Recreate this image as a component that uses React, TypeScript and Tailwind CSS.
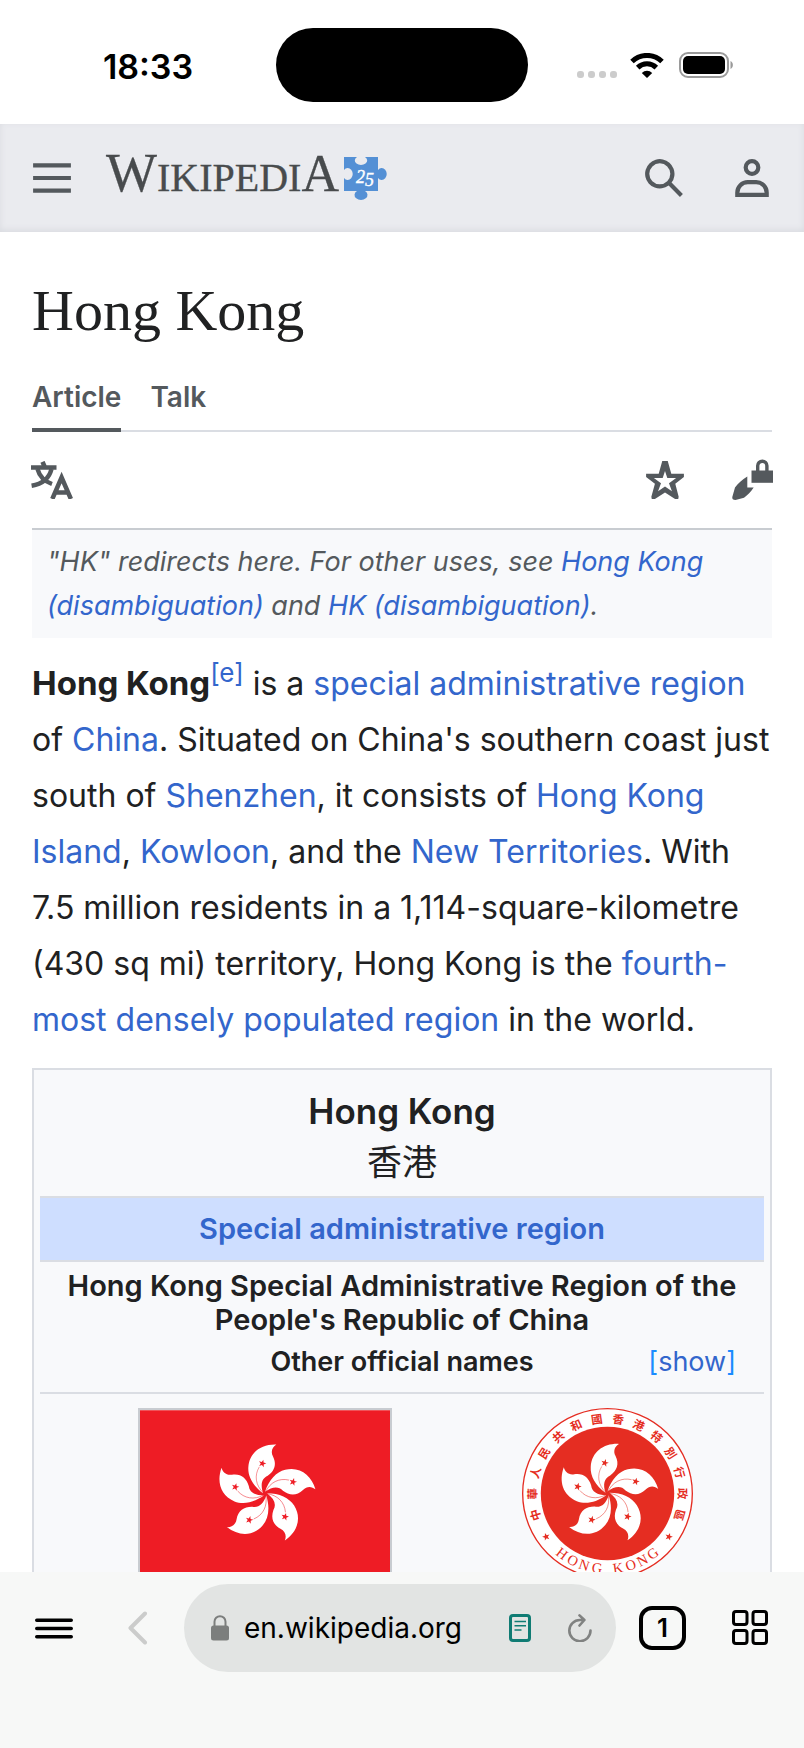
import React from "react";

type IconProps = {
  className?: string;
};

type TextLinkProps = {
  children: React.ReactNode;
};

const PETAL_ANGLES = [0, 72, 144, 216, 288];

const SEAL_CHARACTERS = "中華人民共和國香港特別行政區".split("");

const SEAL_LETTERS = [
  { char: "H", angle: 37 },
  { char: "O", angle: 27.5 },
  { char: "N", angle: 18 },
  { char: "G", angle: 8 },
  { char: "K", angle: -8 },
  { char: "O", angle: -18 },
  { char: "N", angle: -27.5 },
  { char: "G", angle: -37 },
];

const STAR_POINTS = "0,-12 2.8,-3.9 11.4,-3.7 4.6,1.5 7.1,9.7 0,4.8 -7.1,9.7 -4.6,1.5 -11.4,-3.7 -2.8,-3.9";

function WifiIcon({ className }: IconProps) {
  return (
    <svg className={className} viewBox="0 0 34 25" fill="none" stroke="black" strokeWidth="5">
      <path d="M2 8.5A21.5 21.5 0 0 1 32 8.5" />
      <path d="M7.7 14.6A13.3 13.3 0 0 1 26.3 14.6" />
      <path d="M11.8 19.9a7.5 7.5 0 0 1 10.4 0L17 25z" fill="black" stroke="none" />
    </svg>
  );
}

function BatteryIcon({ className }: IconProps) {
  return (
    <svg className={className} viewBox="0 0 55 26">
      <rect x="1" y="1" width="48" height="24" rx="8" fill="none" stroke="#9a9a9a" strokeWidth="2" />
      <rect x="4" y="4" width="42" height="18" rx="5" fill="black" />
      <path d="M51.5 9c3.2 1.4 3.2 6.6 0 8z" fill="#9a9a9a" />
    </svg>
  );
}

function WikipediaLogo({ className }: IconProps) {
  return (
    <svg className={className} viewBox="0 0 281 43" role="img" aria-label="Wikipedia 25">
      <text y="34" fontFamily="'Liberation Serif', serif" fill="#484b4d" stroke="#484b4d" strokeWidth="0.3">
        <tspan fontSize="54">W</tspan>
        <tspan fontSize="40">IKIPEDI</tspan>
        <tspan fontSize="52">A</tspan>
      </text>
      <path
        d="M238 0h13a6.2 4.500 0 1 0 8 0h13v13a5 6 0 1 1 0 8v13h-13a6.500 5 0 1 1-8 0h-13v-13a5 6 0 1 0 0-8z"
        fill="#5490d5"
      />
      <text x="250" y="26" fontFamily="'Liberation Serif', serif" fontSize="18" fontStyle="italic" fill="white" stroke="white" strokeWidth="0.4">
        2<tspan dy="3">5</tspan>
      </text>
    </svg>
  );
}

function MenuIcon({ className }: IconProps) {
  return (
    <svg className={className} viewBox="0 0 20 20" fill="currentColor">
      <path d="M1 3v2h18V3zm0 8h18V9H1zm0 6h18v-2H1z" />
    </svg>
  );
}

function SearchIcon({ className }: IconProps) {
  return (
    <svg className={className} viewBox="0 0 20 20" fill="currentColor">
      <path d="M12.2 13.6a7 7 0 1 1 1.4-1.4l5.4 5.4-1.4 1.4zM3 8a5 5 0 1 0 10 0A5 5 0 0 0 3 8" />
    </svg>
  );
}

function UserIcon({ className }: IconProps) {
  return (
    <svg className={className} viewBox="0 0 20 20" fill="none" stroke="currentColor" strokeWidth="2">
      <circle cx="10" cy="5" r="3" />
      <path d="M3 18v-1a5 5 0 0 1 5-5h4a5 5 0 0 1 5 5v1z" />
    </svg>
  );
}

function LanguageIcon({ className }: IconProps) {
  return (
    <svg className={className} viewBox="0 0 42 38" fill="none" stroke="currentColor" strokeWidth="4.500">
      <path d="M0 6.5h25.5M11.500 .8l2.500 5.7" />
      <path d="M6.5 8c2 7.500 7.500 12.500 14.500 15M20.500 8C18 18 11.500 23 .6 24.800" />
      <path d="M21.300 38 30.600 16.500 39.900 38M24 31.500h13.200" />
    </svg>
  );
}

function StarIcon({ className }: IconProps) {
  return (
    <svg className={className} viewBox="0 0 20 20" fill="currentColor" fillRule="evenodd">
      <path d="M8.700 1h2.600l1.700 6h6v1.600l-4.100 3.200L16.500 18l-.2 1h-1.500L10 16l-4.800 3H3.700l-.2-1 1.700-6.200L1 8.600V7h6zM10 5.700 8.900 9H4.700l3.400 2.500-1.400 3.900L10 13.100l3.300 2.300-1.400-3.900L15.300 9h-4.200z" />
    </svg>
  );
}

function EditLockIcon({ className }: IconProps) {
  return (
    <svg className={className} viewBox="0 0 42 42">
      <path d="M15.300 17.500v11h6.400c-3 4.500-6.500 8-9.700 10.300L3.500 41C1 41 0 40 .3 38L3 28.500C6 24.500 10 20.500 15.300 17.500z" fill="currentColor" />
      <path d="M19.500 11.500H41v12.300H19.500z" fill="currentColor" />
      <path d="M25.700 12V6.800a4.600 4.600 0 0 1 9.200 0V12" fill="none" stroke="currentColor" strokeWidth="3.400" />
    </svg>
  );
}

function Bauhinia({ color }: { color: string }) {
  return (
    <g>
      {PETAL_ANGLES.map((angle) => (
        <g key={angle} transform={`rotate(${angle})`}>
          <path d="M34-148C22-141 16-127 24-112 36-88 28-68 8-54-10-46-14-28-6-2-36-24-52-52-50-80-47-125-10-150 34-148z" fill="white" />
          <path d="M-17-81C-33-55-28-25-5-3" fill="none" stroke={color} strokeOpacity="0.7" strokeWidth="2" />
          <polygon points={STAR_POINTS} fill={color} transform="translate(-8 -91) rotate(15)" />
        </g>
      ))}
    </g>
  );
}

function FlagOfHongKong({ className }: IconProps) {
  return (
    <svg className={className} viewBox="0 0 750 500" role="img" aria-label="Flag of Hong Kong">
      <path d="M0 0h750v500H0z" fill="#ee1c25" />
      <g transform="translate(375 251)">
        <Bauhinia color="#ee1c25" />
      </g>
    </svg>
  );
}

function EmblemOfHongKong({ className }: IconProps) {
  return (
    <svg className={className} viewBox="-255 -255 510 510" role="img" aria-label="Emblem of Hong Kong">
      <circle r="253" fill="white" stroke="#e52d22" strokeWidth="4" />
      <circle r="199" fill="#e52d22" />
      <Bauhinia color="#e52d22" />
      <g fill="#e52d22" textAnchor="middle">
        {SEAL_CHARACTERS.map((char, index) => (
          <text
            key={char}
            y="-211"
            fontSize="34"
            fontWeight="bold"
            fontFamily="'Noto Sans CJK TC', sans-serif"
            transform={`rotate(${(index - 6.5) * 16.4})`}
          >
            {char}
          </text>
        ))}
        {SEAL_LETTERS.map(({ char, angle }) => (
          <text
            key={angle}
            y="239"
            fontSize="43"
            fontWeight="normal"
            fontFamily="'Liberation Serif', serif"
            transform={`rotate(${angle})`}
          >
            {char}
          </text>
        ))}
      </g>
      <polygon points={STAR_POINTS} fill="#e52d22" transform="translate(-183 129) rotate(55)" />
      <polygon points={STAR_POINTS} fill="#e52d22" transform="translate(183 129) rotate(-55)" />
    </svg>
  );
}

function TextLink({ children }: TextLinkProps) {
  return (
    <a href="#" className="text-[#3366cc]">
      {children}
    </a>
  );
}

function StatusBar() {
  return (
    <div className="grid h-[124px] shrink-0 grid-cols-[1fr_252px_1fr] items-center pt-[6px]">
      <div className="pt-[2px] pl-5 text-center text-[34px] font-semibold text-black">18:33</div>
      <div className="h-[74px] rounded-full bg-black" />
      <div className="flex items-center justify-center pr-[22px]">
        <div className="flex gap-1 pt-[18px]">
          {[...Array(4)].map((_, i) => (
            <span key={i} className="size-[7px] rounded-[3px] bg-[#cccccc]" />
          ))}
        </div>
        <WifiIcon className="ml-[13px] h-[25px] w-[34px]" />
        <BatteryIcon className="ml-[15px] h-[26px] w-[55px]" />
      </div>
    </div>
  );
}

function SiteHeader() {
  return (
    <header className="flex h-[108px] shrink-0 items-center bg-[#eaebef] px-[31px] text-[#54595d] shadow-[inset_0_-2px_6px_#d9dbe0]">
      <button type="button" aria-label="Open main menu">
        <MenuIcon className="size-[42px]" />
      </button>
      <a href="#" className="ml-[33px]">
        <WikipediaLogo className="h-[43px] w-[281px] overflow-visible" />
      </a>
      <button type="button" aria-label="Search" className="ml-auto">
        <SearchIcon className="size-[42px]" />
      </button>
      <button type="button" aria-label="User menu" className="ml-[46px]">
        <UserIcon className="size-[42px]" />
      </button>
    </header>
  );
}

function Infobox() {
  return (
    <section className="mt-5 border-2 border-[#dadde3] bg-[#f8f9fb] px-1.5 pt-[18px] pb-6 text-center font-semibold text-[#202122]">
      <h2 className="text-[35px] leading-[46px]">Hong Kong</h2>
      <p lang="zh-Hant" className="mt-[3px] font-['Noto_Sans_CJK_TC',sans-serif] text-[35px] leading-[46px] font-normal">
        香港
      </p>
      <div className="mt-[13px] border-y-2 border-[#dadde3] bg-[#cedeff] py-[11px] text-[29px] leading-10">
        <TextLink>Special administrative region</TextLink>
      </div>
      <p className="mt-[7px] text-[29px] leading-[34px]">
        Hong Kong Special Administrative Region of the People's Republic of China
      </p>
      <div className="mt-2 grid grid-cols-[1fr_auto_1fr] items-baseline border-b-2 border-[#dadde3] px-7 pb-[13px] leading-[34px]">
        <p className="col-start-2 text-[27px]">Other official names</p>
        <button type="button" className="justify-self-end text-[27px] font-normal text-[#1a8cff]">
          [<span className="text-[#3366cc]">show</span>]
        </button>
      </div>
      <div className="mt-3.5 grid grid-cols-[450fr_234fr] justify-items-center pr-10">
        <FlagOfHongKong className="box-content h-[167px] w-[250px] border-2 border-[#c8ccd1]" />
        <EmblemOfHongKong className="size-[171px]" />
      </div>
    </section>
  );
}

function Article() {
  return (
    <main className="min-h-0 flex-1 overflow-hidden px-8">
      <h1 className="pt-[43px] font-['Liberation_Serif',serif] text-[58px] leading-[72px] text-[#202122]">Hong Kong</h1>

      <nav className="mt-8 flex gap-[29px] border-b-2 border-[#dadde3] text-[28px] leading-9 font-semibold text-[#54595d]">
        <a href="#" className="-mb-0.5 border-b-4 border-[#54595d] pb-[13px]">
          Article
        </a>
        <a href="#">Talk</a>
      </nav>

      <div className="flex h-[98px] items-center border-b-2 border-[#c8ccd1] text-[#54595d]">
        <button type="button" aria-label="Change language" className="-ml-px">
          <LanguageIcon className="h-[38px] w-[42px]" />
        </button>
        <button type="button" aria-label="Watch this page" className="ml-auto">
          <StarIcon className="size-[42px]" />
        </button>
        <button type="button" aria-label="Edit protected page" className="-mr-0.5 ml-[46px]">
          <EditLockIcon className="size-[42px]" />
        </button>
      </div>

      <p className="bg-[#f8f9fb] px-[15px] py-2.5 text-[27px] leading-[44px] text-[#54595d] italic">
        "HK" redirects here. For other uses, see <TextLink>Hong Kong (disambiguation)</TextLink> and{" "}
        <TextLink>HK (disambiguation)</TextLink>.
      </p>

      <p className="mt-[18px] text-[32px] leading-[56px] text-[#202122]">
        <b className="text-[33px] leading-none">Hong Kong</b>
        <sup className="text-[26px] leading-none">
          <TextLink>[e]</TextLink>
        </sup>{" "}
        is a <TextLink>special administrative region</TextLink> of <TextLink>China</TextLink>. Situated on China's
        southern coast just south of <TextLink>Shenzhen</TextLink>, it consists of{" "}
        <TextLink>Hong Kong Island</TextLink>, <TextLink>Kowloon</TextLink>, and the{" "}
        <TextLink>New Territories</TextLink>. With 7.5&nbsp;million residents in a 1,114-square-kilometre
        (430&nbsp;sq&nbsp;mi) territory, Hong Kong is the{" "}
        <TextLink>fourth-most densely populated region</TextLink> in the world.
      </p>

      <Infobox />
    </main>
  );
}

function BrowserToolbar() {
  return (
    <footer className="flex h-[176px] shrink-0 items-start bg-[#f7f8f7] pt-3 pr-9 pl-[35px] text-black">
      <button type="button" aria-label="Menu" className="flex h-[88px] items-center">
        <svg className="h-[21px] w-[38px]" viewBox="0 0 38 21" stroke="black" strokeWidth="3.600" strokeLinecap="round">
          <path d="M1.800 2.200h34.400M1.800 10.500h34.400M1.800 18.800h34.400" />
        </svg>
      </button>
      <button type="button" aria-label="Back" className="ml-[55px] flex h-[88px] items-center">
        <svg className="h-[34px] w-5" viewBox="0 0 20 34" fill="none" stroke="#cbcccb" strokeWidth="4" strokeLinecap="round" strokeLinejoin="round">
          <path d="M17 2.500 2.500 17 17 31.500" />
        </svg>
      </button>
      <div className="ml-9 flex h-[88px] min-w-0 flex-1 items-center rounded-full bg-[#e2e4e3] pr-6 pl-[27px]">
        <svg className="h-[26px] w-[18px] shrink-0" viewBox="0 0 18 26">
          <rect y="10.500" width="18" height="15" rx="2.500" fill="#7c7e7d" />
          <path d="M3.500 11V6.700a5.500 5.500 0 0 1 11 0V11" fill="none" stroke="#7c7e7d" strokeWidth="2" />
        </svg>
        <input
          type="text"
          readOnly
          value="en.wikipedia.org"
          aria-label="Address"
          className="ml-[15px] min-w-0 flex-1 bg-transparent text-[28px] leading-10 outline-none"
        />
        <button type="button" aria-label="Reader mode" className="shrink-0">
          <svg className="h-7 w-[22px]" viewBox="0 0 22 28" fill="none" stroke="#107c74">
            <rect x="1.500" y="1.500" width="19" height="25" rx="2.500" strokeWidth="3" />
            <path d="M5.500 7.500h11.500M5.500 11.800h11.500M5.500 16h7" strokeWidth="1.600" />
          </svg>
        </button>
        <button type="button" aria-label="Reload" className="ml-[37px] shrink-0">
          <svg className="h-7 w-6" viewBox="0 0 24 28" fill="none" stroke="#808281" strokeWidth="2.600" strokeLinecap="round" strokeLinejoin="round">
            <path d="M22.500 16.500A10.600 10.600 0 1 1 12 6h4M11.500 1.400 16.400 6l-4.900 5.500" />
          </svg>
        </button>
      </div>
      <div className="flex h-[88px] items-center">
        <button
          type="button"
          aria-label="1 open tab"
          className="ml-[23px] h-11 w-[47px] rounded-[13px] border-4 border-black text-[26px] leading-none font-semibold"
        >
          1
        </button>
        <button type="button" aria-label="Tab groups" className="ml-[46px]">
          <svg className="size-9" viewBox="0 0 36 36" fill="none" stroke="black" strokeWidth="3">
            <rect x="1.500" y="1.500" width="13.500" height="13" rx="2.500" />
            <rect x="21" y="1.500" width="13.500" height="13" rx="2.500" />
            <rect x="1.500" y="20.500" width="13.500" height="13" rx="2.500" />
            <rect x="21" y="20.500" width="13.500" height="13" rx="2.500" />
          </svg>
        </button>
      </div>
    </footer>
  );
}

export default function App() {
  return (
    <div className="flex h-screen flex-col bg-white font-[Inter,'Noto_Sans_CJK_TC',sans-serif]">
      <StatusBar />
      <SiteHeader />
      <Article />
      <BrowserToolbar />
    </div>
  );
}
